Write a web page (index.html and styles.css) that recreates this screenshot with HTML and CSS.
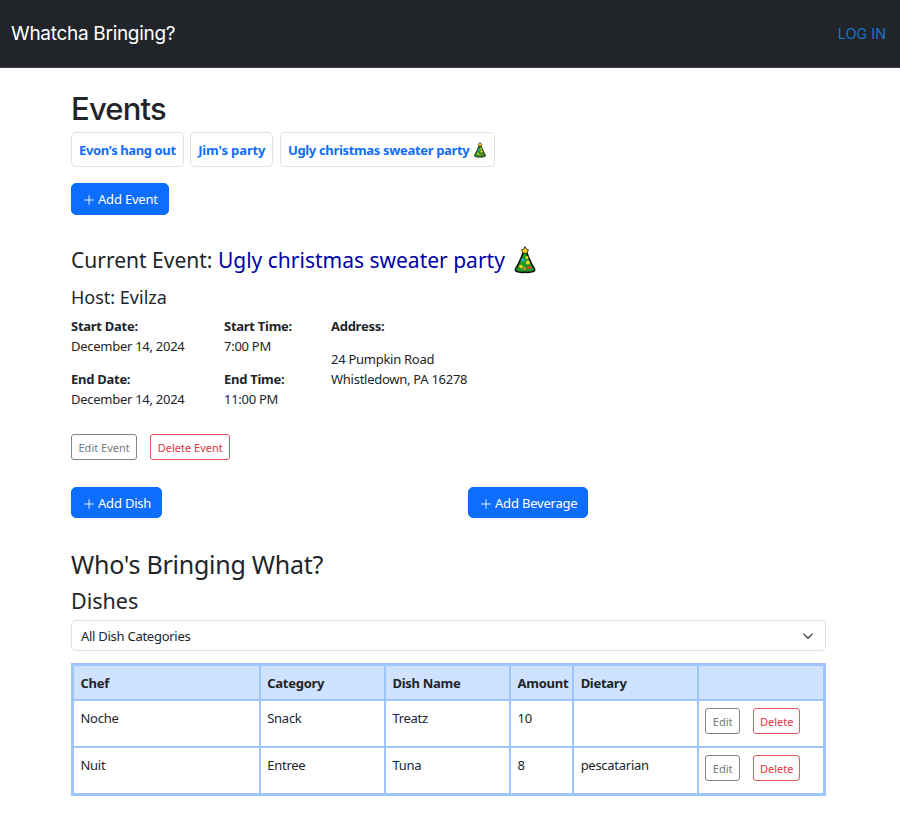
FILE: index.html
```html
<!DOCTYPE html>
<html lang="en">
<head>
<meta charset="utf-8">
<title>Whatcha Bringing?</title>
<link rel="stylesheet" href="styles.css">
</head>
<body>
<svg class="defs" width="0" height="0" aria-hidden="true">
  <symbol id="tree" viewBox="0 0 24 28">
    <path d="M12 3C10.5 5 10 7 9.3 9 8.6 11.5 7 14 6.2 16 5.3 18.5 3.5 21 2.5 23 2 24.6 3 25.5 4.5 25.5 6 26.8 8 25.8 9.5 26.5 11 26 13 26 14.5 26.5 16 25.8 18 26.8 19.5 25.5 21 25.5 22 24.6 21.5 23 20.5 21 18.7 18.5 17.8 16 17 14 15.4 11.5 14.7 9 14 7 13.5 5 12 3Z" fill="#1f9a24" stroke="#111" stroke-width="1.6" stroke-linejoin="round"/>
    <path d="M12 .6 13.4 3 15.6 3.9 14.2 5.8 14.4 7.9 12 7 9.6 7.9 9.8 5.8 8.4 3.9 10.6 3Z" fill="#fbd31e" stroke="#111" stroke-width=".8"/>
    <circle cx="9.8" cy="14" r="1.8" fill="#29a8e0"/>
    <circle cx="14" cy="11.5" r="1.5" fill="#fbd31e"/>
    <circle cx="14.8" cy="16.5" r="1.9" fill="#fbd31e"/>
    <circle cx="8" cy="20.5" r="1.7" fill="#fbd31e"/>
    <circle cx="16.5" cy="21.5" r="1.8" fill="#e2452c"/>
    <circle cx="11.5" cy="22.5" r="1.6" fill="#e2852c"/>
  </symbol>
  <symbol id="plus" viewBox="0 0 16 16">
    <path d="M8 2.5v11M2.5 8h11" fill="none" stroke="currentColor" stroke-width="1"/>
  </symbol>
</svg>

<header class="navbar">
  <span class="brand">Whatcha Bringing?</span>
  <a class="login" href="#">LOG IN</a>
</header>

<main class="page">
  <h1 class="title">Events</h1>
  <div class="chips">
    <a class="chip chip-tight" href="#">Evon's hang out</a>
    <a class="chip chip-loose" href="#">Jim's party</a>
    <a class="chip" href="#">Ugly christmas sweater party <svg class="tree-small"><use href="#tree"/></svg></a>
  </div>
  <button class="btn-add add-event" type="button"><svg class="plus"><use href="#plus"/></svg>Add Event</button>

  <h2 class="current">Current Event: <span class="current-name">Ugly christmas sweater party</span><svg class="tree-big"><use href="#tree"/></svg></h2>
  <h3 class="host">Host: Evilza</h3>

  <div class="details">
    <div class="col-date">
      <div class="label">Start Date:</div>
      <div class="value gap">December 14, 2024</div>
      <div class="label">End Date:</div>
      <div class="value">December 14, 2024</div>
    </div>
    <div class="col-time">
      <div class="label">Start Time:</div>
      <div class="value gap">7:00 PM</div>
      <div class="label">End Time:</div>
      <div class="value">11:00 PM</div>
    </div>
    <div class="col-address">
      <div class="label addr-label">Address:</div>
      <div class="value">24 Pumpkin Road</div>
      <div class="value">Whistledown, PA 16278</div>
    </div>
  </div>

  <div class="event-actions">
    <button class="btn-sm grey" type="button">Edit Event</button>
    <button class="btn-sm red" type="button">Delete Event</button>
  </div>

  <div class="add-row">
    <div class="add-cell"><button class="btn-add" type="button"><svg class="plus"><use href="#plus"/></svg>Add Dish</button></div>
    <div class="add-cell"><button class="btn-add" type="button"><svg class="plus"><use href="#plus"/></svg>Add Beverage</button></div>
  </div>

  <h2 class="who">Who's Bringing What?</h2>
  <h3 class="dishes">Dishes</h3>

  <div class="select">
    <span>All Dish Categories</span>
    <svg class="chev" viewBox="0 0 16 16"><path d="M2.5 5.5 8 11l5.5-5.5" fill="none" stroke="#343a40" stroke-width="1.8" stroke-linecap="round" stroke-linejoin="round"/></svg>
  </div>

  <table class="dish-table">
    <colgroup>
      <col class="c-chef"><col class="c-cat"><col class="c-name"><col class="c-amt"><col class="c-diet"><col class="c-act">
    </colgroup>
    <thead>
      <tr><th>Chef</th><th>Category</th><th>Dish Name</th><th>Amount</th><th>Dietary</th><th></th></tr>
    </thead>
    <tbody>
      <tr>
        <td>Noche</td><td>Snack</td><td>Treatz</td><td>10</td><td></td>
        <td class="acts"><button class="btn-sm grey edit" type="button">Edit</button><button class="btn-sm red del" type="button">Delete</button></td>
      </tr>
      <tr>
        <td>Nuit</td><td>Entree</td><td>Tuna</td><td>8</td><td>pescatarian</td>
        <td class="acts"><button class="btn-sm grey edit" type="button">Edit</button><button class="btn-sm red del" type="button">Delete</button></td>
      </tr>
    </tbody>
  </table>
</main>
</body>
</html>
```

FILE: styles.css
```css
* { box-sizing: border-box; }
html, body { margin: 0; padding: 0; }
body {
  background: #fff;
  color: #212529;
  font-family: "Noto Sans", "Open Sans", sans-serif;
  font-size: 13px;
  line-height: 20px;
  letter-spacing: -0.27px;
}
.defs { position: absolute; }

.navbar {
  height: 68px;
  background: #212529;
  border-bottom: 1px solid #3a3f44;
  display: flex;
  align-items: center;
  justify-content: space-between;
  padding: 0 14px 0 11px;
}
.brand { color: #fff; font-family: Inter, sans-serif; font-size: 19px; letter-spacing: -0.3px; }
.login { color: #1a73c8; font-family: Inter, sans-serif; font-size: 14.4px; letter-spacing: 0; text-decoration: none; }

.page { width: 755px; margin-left: 71px; }
.title { margin: 0; padding-top: 22px; font-family: Inter, sans-serif; font-size: 31px; font-weight: 500; line-height: 38px; letter-spacing: -0.8px; }

.chips { display: flex; gap: 6.5px; margin-top: 4px; }
.chip {
  height: 35px;
  padding: 0 7px;
  display: flex;
  align-items: center;
  gap: 4px;
  border: 1.5px solid #dee2e6;
  border-radius: 5px;
  color: #0d6efd;
  font-weight: 700;
  font-size: 13px;
  letter-spacing: -0.33px;
  text-decoration: none;
  white-space: nowrap;
}
.chip-tight { letter-spacing: -0.4px; }
.chip-loose { letter-spacing: -0.12px; }
.tree-small { width: 14px; height: 16px; }

.btn-add {
  height: 32px;
  padding: 0 10px;
  display: inline-flex;
  align-items: center;
  gap: 2px;
  background: #0d6efd;
  border: 1px solid #0d6efd;
  border-radius: 5px;
  color: #fff;
  font: inherit;
  font-size: 13px;
  letter-spacing: -0.2px;
}
.add-event { margin-top: 16px; display: flex; }
.plus { width: 14px; height: 14px; margin-top: 2px; }

.current { margin: 30px 0 0; display: flex; align-items: center; font-size: 21px; font-weight: 400; line-height: 30px; letter-spacing: 0; white-space: pre; }
.current-name { color: #0000a8; }
.tree-big { width: 24px; height: 28px; margin-left: 8px; }
.host { margin: 9px 0 0; font-size: 18px; font-weight: 400; line-height: 26px; letter-spacing: 0; }

.details { display: flex; margin-top: 6px; }
.col-date { width: 153px; }
.col-time { width: 107px; }
.label { font-weight: 700; }
.gap { margin-bottom: 13px; }
.addr-label { margin-bottom: 13px; }

.event-actions { display: flex; gap: 13px; margin-top: 25px; }
.btn-sm {
  height: 26px;
  padding: 0 6.5px;
  background: #fff;
  border: 1px solid;
  border-radius: 3px;
  font: inherit;
  font-size: 11px;
  letter-spacing: 0;
  line-height: 1;
}
.grey { color: #737a81; border-color: #7d848a; }
.red { color: #dc3545; border-color: #e25563; }

.add-row { display: flex; margin-top: 27px; }
.add-row .btn-add { height: 31px; padding-right: 9.5px; }
.add-cell { flex: 0 0 397px; }

.who { margin: 30px 0 0; font-size: 25px; font-weight: 400; line-height: 32px; letter-spacing: -0.25px; }
.dishes { margin: 6px 0 0; font-size: 21.5px; font-weight: 400; line-height: 30px; letter-spacing: 0; }

.select {
  height: 31px;
  margin-top: 4px;
  padding: 0 11px 0 9px;
  display: flex;
  align-items: center;
  justify-content: space-between;
  border: 1px solid #dee2e6;
  border-radius: 5px;
}
.chev { width: 12px; height: 12px; }

.dish-table {
  width: 755px;
  margin-top: 12px;
  table-layout: fixed;
  border-collapse: collapse;
  border: 3px solid #9ec5fe;
}
.c-chef { width: 187px; }
.c-cat { width: 125px; }
.c-name { width: 125px; }
.c-amt { width: 63px; }
.c-diet { width: 125px; }
.c-act { width: 126px; }
.dish-table th, .dish-table td { border: 2px solid #9ec5fe; padding: 7px 6.5px; text-align: left; vertical-align: top; }
.dish-table th { height: 35px; padding-bottom: 6px; background: #cfe2ff; font-weight: 700; }
.dish-table td { height: 47px; }
.dish-table .acts { padding: 7px 6px; }
.edit { margin-right: 13px; }
.del { padding: 0 6px; }
```
